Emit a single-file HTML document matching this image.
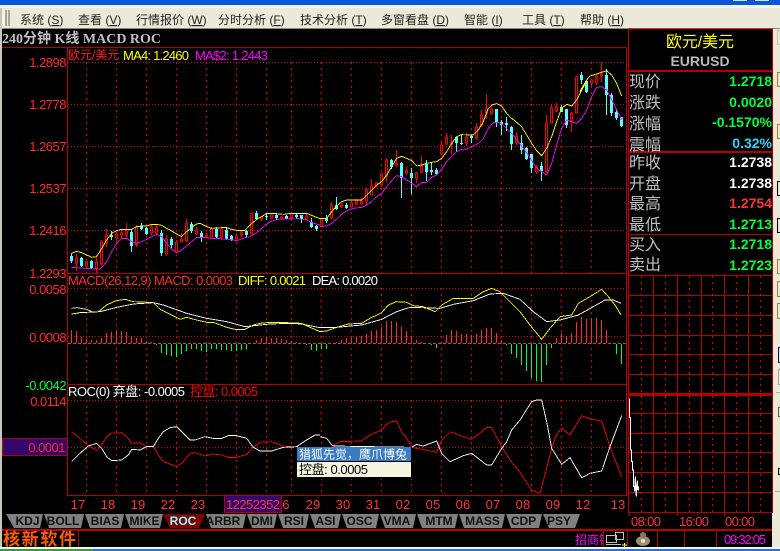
<!DOCTYPE html>
<html lang="zh"><head><meta charset="utf-8"><title>EURUSD</title>
<style>
html,body{margin:0;padding:0;background:#000;width:780px;height:551px;overflow:hidden}
svg{display:block;position:absolute;left:0;top:0}
text{font-family:"Liberation Sans","WenQuanYi Zen Hei","Noto Sans CJK SC",sans-serif;font-size:12px}
.m text,text.m{fill:#222;font-size:12px}
.ln{shape-rendering:crispEdges;fill:none}
.ax{fill:#ff2a2a;text-anchor:end;font-size:13px;letter-spacing:-.5px}
.xl{fill:#ff3333;text-anchor:middle;font-size:13px;letter-spacing:.2px}
.tb{fill:#111;font-weight:bold;text-anchor:middle}
.lb{fill:#c0c0c0;font-size:16px}
.v{font-size:14px;font-weight:bold;text-anchor:end}
.lg{font-size:13px}
polyline{stroke-width:.9}
</style></head><body>
<svg width="780" height="551" viewBox="0 0 780 551" xmlns="http://www.w3.org/2000/svg">
<rect width="780" height="551" fill="#000"/>
<!-- window chrome -->
<rect width="780" height="5" fill="#0a55de"/>
<rect x="733" y="0" width="14" height="1" fill="#d8e4f8"/><rect x="755" y="0" width="14" height="1" fill="#d8e4f8"/>
<rect y="5" width="780" height="3" fill="#f4f3ec"/>
<rect y="8" width="780" height="20" fill="#ece9d8"/>
<rect y="28" width="780" height="1" fill="#8a887c"/>
<rect x="0" y="8" width="2" height="540" fill="#c9c6b8"/>
<rect x="772" y="29" width="8" height="519" fill="#ece9d8"/>
<rect x="3" y="10" width="1" height="16" fill="#fff"/><rect x="5" y="10" width="2" height="16" fill="#a8a698"/><rect x="8" y="10" width="2" height="16" fill="#a8a698"/>
<!-- menu -->
<g class="m">
<text x="20" y="24">系统 (<tspan text-decoration="underline">S</tspan>)</text>
<text x="78" y="24">查看 (<tspan text-decoration="underline">V</tspan>)</text>
<text x="136" y="24">行情报价 (<tspan text-decoration="underline">W</tspan>)</text>
<text x="218" y="24">分时分析 (<tspan text-decoration="underline">F</tspan>)</text>
<text x="300" y="24">技术分析 (<tspan text-decoration="underline">T</tspan>)</text>
<text x="381" y="24">多窗看盘 (<tspan text-decoration="underline">D</tspan>)</text>
<text x="464" y="24">智能 (<tspan text-decoration="underline">I</tspan>)</text>
<text x="522" y="24">工具 (<tspan text-decoration="underline">T</tspan>)</text>
<text x="580" y="24">帮助 (<tspan text-decoration="underline">H</tspan>)</text>
</g>
<text x="2" y="43" style="font-family:'Liberation Serif','WenQuanYi Zen Hei','Noto Sans CJK SC',serif;font-size:14px;font-weight:bold" fill="#c0c0c0">240分钟 K线 MACD ROC</text>

<!-- dotted grid -->
<g class="ln" stroke="#e00000" stroke-dasharray="1 2">
<path d="M68 62.5H626M68 104.5H626M68 146.5H626M68 188.5H626M68 230.5H626M68 288.5H626M68 336.5H626M68 400.5H626M68 447.5H626"/>
</g>
<g class="ln" stroke="#e00000" stroke-dasharray="2 4">
<path d="M86.5 62V273M116.5 62V273M146.5 62V273M176.5 62V273M206.5 62V273M236.5 62V273M266.5 62V273M291.5 62V273M321.5 62V273M351.5 62V273M381.5 62V273M411.5 62V273M441.5 62V273M471.5 62V273M501.5 62V273M531.5 62V273M561.5 62V273M591.5 62V273"/>
<path d="M86.5 288V384M116.5 288V384M146.5 288V384M176.5 288V384M206.5 288V384M236.5 288V384M266.5 288V384M291.5 288V384M321.5 288V384M351.5 288V384M381.5 288V384M411.5 288V384M441.5 288V384M471.5 288V384M501.5 288V384M531.5 288V384M561.5 288V384M591.5 288V384"/>
<path d="M86.5 400V495M116.5 400V495M146.5 400V495M176.5 400V495M206.5 400V495M236.5 400V495M266.5 400V495M291.5 400V495M321.5 400V495M351.5 400V495M381.5 400V495M411.5 400V495M441.5 400V495M471.5 400V495M501.5 400V495M531.5 400V495M561.5 400V495M591.5 400V495"/>
</g>
<!-- pane frames -->
<g class="ln" stroke="#b80000">
<path d="M2 47.5H626.5V495.5H67.5V47.5"/>
<path d="M68 273.5H626M68 384.5H626"/>
</g>

<!-- candles: wicks -->
<path class="ln" stroke="#ff0000" d="M76.5 254V271M86.5 259V267M96.5 255V273M101.5 240V265M106.5 229V247M116.5 232V242M121.5 230V239M126.5 223V238M136.5 225V247M151.5 225V235M156.5 225V235M166.5 235V256M176.5 240V253M181.5 233V242M186.5 219V242M196.5 227V235M206.5 233V238M211.5 227V238M221.5 227V240M236.5 233V240M241.5 230V237M251.5 213V235M261.5 216V221M271.5 215V219M281.5 216V220M291.5 213V219M306.5 214V219M321.5 219V226M331.5 202V219M341.5 203V208M351.5 202V208M356.5 199V205M361.5 198V205M366.5 188V205M371.5 179V195M376.5 182V187M381.5 173V187M386.5 158V182M396.5 150V167M406.5 167V175M416.5 172V183M421.5 156V173M441.5 140V155M446.5 133V145M451.5 135V154M466.5 133V146M476.5 123V140M481.5 110V127M486.5 94V119M491.5 105V115M516.5 132V145M536.5 165V174M546.5 115V173M551.5 104V123M556.5 103V112M571.5 112V132M576.5 76V113M591.5 79V87M596.5 74V85M601.5 62V82"/>
<!-- red hollow bodies -->
<path class="ln" stroke="#ff0000" style="fill:#000" d="M75.5 258h2V263h-2zM85.5 262h2V266h-2zM95.5 262h2V268h-2zM100.5 242h2V264h-2zM105.5 235h2V243h-2zM115.5 234h2V238h-2zM120.5 233h2V235h-2zM125.5 231h2V235h-2zM135.5 227h2V245h-2zM150.5 227h2V233h-2zM155.5 227h2V233h-2zM165.5 239h2V254h-2zM175.5 242h2V252h-2zM180.5 239h2V242h-2zM185.5 223h2V241h-2zM195.5 231h2V234h-2zM205.5 235h2V237h-2zM210.5 229h2V237h-2zM220.5 229h2V237h-2zM235.5 236h2V239h-2zM240.5 232h2V235h-2zM250.5 213h2V234h-2zM260.5 217h2V219h-2zM270.5 215h2V218h-2zM280.5 217h2V219h-2zM290.5 214h2V218h-2zM305.5 216h2V219h-2zM320.5 219h2V226h-2zM330.5 205h2V218h-2zM340.5 205h2V207h-2zM350.5 203h2V207h-2zM355.5 201h2V204h-2zM360.5 201h2V204h-2zM365.5 190h2V201h-2zM370.5 186h2V195h-2zM375.5 183h2V187h-2zM380.5 174h2V185h-2zM385.5 160h2V176h-2zM395.5 163h2V165h-2zM405.5 170h2V173h-2zM415.5 173h2V178h-2zM420.5 166h2V172h-2zM440.5 145h2V154h-2zM445.5 137h2V144h-2zM450.5 143h2V144h-2zM465.5 137h2V143h-2zM475.5 127h2V138h-2zM480.5 115h2V125h-2zM485.5 109h2V113h-2zM490.5 109h2V114h-2zM515.5 136h2V143h-2zM535.5 167h2V172h-2zM545.5 123h2V172h-2zM550.5 108h2V123h-2zM555.5 107h2V111h-2zM570.5 113h2V122h-2zM575.5 77h2V113h-2zM590.5 80h2V83h-2zM595.5 76h2V83h-2zM600.5 74h2V76h-2z"/>
<!-- cyan wicks -->
<path class="ln" stroke="#54ffff" d="M71.5 253V263M81.5 257V267M91.5 260V269M111.5 231V240M131.5 230V252M141.5 223V230M146.5 227V235M161.5 230V256M171.5 237V248M191.5 222V233M201.5 231V242M216.5 227V239M226.5 227V240M231.5 235V241M246.5 230V237M256.5 211V220M266.5 213V220M276.5 214V220M286.5 215V219M296.5 213V219M301.5 215V223M311.5 218V228M316.5 225V231M326.5 215V223M336.5 197V210M346.5 203V209M391.5 159V169M401.5 162V198M411.5 168V194M426.5 160V181M431.5 163V175M436.5 168V175M456.5 137V152M461.5 135V145M471.5 135V143M496.5 109V127M501.5 120V135M506.5 117V131M511.5 126V150M521.5 135V154M526.5 147V160M531.5 154V173M541.5 162V181M561.5 105V112M566.5 109V128M581.5 72V84M586.5 80V93M606.5 69V115M611.5 93V116M616.5 110V120M621.5 117V127"/>
<!-- cyan bodies -->
<path class="ln" stroke="#54ffff" stroke-width="3" d="M71.5 256V261M81.5 258V266M91.5 261V268M111.5 235V237M131.5 232V246M141.5 226V229M146.5 228V234M161.5 233V253M171.5 239V245M191.5 224V231M201.5 233V237M216.5 229V237M226.5 230V239M231.5 236V240M246.5 231V235M256.5 213V219M266.5 216V217M276.5 215V218M286.5 216V219M296.5 215V217M301.5 215V219M311.5 222V227M316.5 226V229M326.5 218V221M336.5 205V209M346.5 205V208M391.5 160V167M401.5 163V178M411.5 173V178M426.5 164V172M431.5 170V172M436.5 170V174M456.5 137V143M461.5 143V144M471.5 136V138M496.5 109V122M501.5 122V125M506.5 123V125M511.5 127V144M521.5 143V150M526.5 148V159M531.5 154V168M541.5 166V171M561.5 107V112M566.5 109V125M581.5 75V80M586.5 81V92M606.5 75V95M611.5 95V113M616.5 112V118M621.5 117V126"/>

<!-- MA lines -->
<g class="ln" stroke="#ffff00">
<g transform="translate(0,140) scale(.33333)"><polyline vector-effect="non-scaling-stroke" points="215,340 230,334 245,338 260,345 275,352 290,350 305,325 320,300 335,280 350,272 365,268 395,268 410,260 425,258 440,258 455,253 470,253 485,256 500,265 515,273 530,282 545,290 560,275 575,262 590,252 600,250 620,260 635,265 665,263 680,263 695,268 710,271 735,271 750,255 770,238 785,230 800,220 820,220 850,223 875,220 920,220 935,226 960,236"/></g>
<g transform="translate(320,80) scale(.33333)"><polyline vector-effect="non-scaling-stroke" points="0,415 20,415 35,395 50,378 65,365 80,360 125,360 140,345 155,330 170,315 185,305 200,285 215,260 230,235 245,229 260,235 275,242 290,258 305,255 320,250 335,247 350,245 365,235 380,215 395,190 410,170 425,164 460,165 475,150 490,125 505,85 515,75 530,71 545,78 560,100 575,115 590,127 605,140 620,165 635,190 650,212 665,227 680,205 695,170 710,125 725,85 740,73 755,78 770,60 785,30 800,5"/></g>
<g transform="translate(390,0) scale(.33333)"><polyline vector-effect="non-scaling-stroke" points="570,275 575,265 590,240 600,228 620,222 650,212 665,225 680,250 695,288"/></g>
</g>
<g class="ln" stroke="#ff00ff">
<g transform="translate(0,140) scale(.33333)"><polyline vector-effect="non-scaling-stroke" points="215,382 300,388 320,365 335,335 350,310 365,296 380,295 395,305 410,310 425,305 440,298 455,290 470,283 485,290 500,310 515,328 530,338 545,330 560,318 575,305 590,292 620,293 635,295 680,297 710,302 735,293 750,290 770,278 785,265 800,252 815,243 835,238 895,236 920,240 935,248 960,255"/></g>
<g transform="translate(320,80) scale(.33333)"><polyline vector-effect="non-scaling-stroke" points="0,440 20,438 35,430 50,417 65,403 80,392 100,385 125,382 140,375 155,365 170,350 185,340 200,320 215,302 230,287 245,290 260,300 275,310 290,320 305,307 320,307 335,292 350,285 365,268 380,245 395,228 410,215 425,208 440,207 455,200 475,190 490,175 505,145 520,127 535,127 550,135 565,150 580,165 595,185 610,205 625,225 640,250 655,270 670,277 680,285 695,250 710,195 725,145 740,120 755,125 770,130 785,115 800,90 815,50 830,22 845,20 860,30 875,60 890,90 905,120"/></g>
</g>

<!-- MACD bars -->
<path class="ln" stroke="#ff2a2a" stroke-dasharray="3 2" d="M68 343.5H626"/>
<path class="ln" stroke="#ff2a2a" d="M71.5 343V330M76.5 343V331M81.5 343V337M86.5 343V339M91.5 343V340M96.5 343V340M101.5 343V338M106.5 343V333M111.5 343V332M116.5 343V330M121.5 343V331M126.5 343V332M131.5 343V336M136.5 343V338M141.5 343V338M146.5 343V341M151.5 343V342M256.5 343V340M261.5 343V338M266.5 343V337M271.5 343V338M276.5 343V338M281.5 343V339M286.5 343V340M291.5 343V341M296.5 343V342M336.5 343V342M341.5 343V340M346.5 343V338M351.5 343V338M356.5 343V337M361.5 343V336M366.5 343V334M371.5 343V331M376.5 343V330M381.5 343V327M386.5 343V321M391.5 343V321M396.5 343V322M401.5 343V327M406.5 343V331M411.5 343V336M416.5 343V340M421.5 343V342M441.5 343V342M446.5 343V335M451.5 343V330M456.5 343V331M461.5 343V334M466.5 343V334M471.5 343V335M476.5 343V334M481.5 343V330M486.5 343V328M491.5 343V328M496.5 343V333M501.5 343V340M556.5 343V338M561.5 343V333M566.5 343V336M571.5 343V333M576.5 343V322M581.5 343V317M586.5 343V319M591.5 343V318M596.5 343V318M601.5 343V320M606.5 343V330"/>
<path class="ln" stroke="#00ff3c" d="M156.5 344V345M161.5 344V353M166.5 344V355M171.5 344V356M176.5 344V357M181.5 344V354M186.5 344V351M191.5 344V349M196.5 344V349M201.5 344V351M206.5 344V352M211.5 344V349M216.5 344V349M221.5 344V350M226.5 344V350M231.5 344V351M236.5 344V351M241.5 344V350M246.5 344V349M306.5 344V345M311.5 344V350M316.5 344V351M321.5 344V349M326.5 344V349M431.5 344V345M436.5 344V348M506.5 344V345M511.5 344V354M516.5 344V358M521.5 344V365M526.5 344V371M531.5 344V378M536.5 344V381M541.5 344V382M546.5 344V365M551.5 344V348M616.5 344V354M621.5 344V364"/>
<!-- MACD lines -->
<g class="ln" stroke="#ffffff">
<g transform="translate(0,270) scale(.33333)"><polyline vector-effect="non-scaling-stroke" points="215,132 240,128 300,125 350,112 400,102 460,98 490,105 560,130 620,145 680,155 735,170 780,165 810,162 870,160 905,162 960,173"/></g>
<g transform="translate(320,270) scale(.33333)"><polyline vector-effect="non-scaling-stroke" points="0,173 50,172 125,165 185,148 230,125 270,112 360,115 400,103 460,92 510,72 550,70 600,88 640,125 680,155 720,150 775,135 820,110 855,90 880,90 903,100"/></g>
</g>
<g class="ln" stroke="#ffff00">
<g transform="translate(0,270) scale(.33333)"><polyline vector-effect="non-scaling-stroke" points="215,115 230,113 260,118 280,127 295,125 320,105 345,93 375,88 400,95 445,97 460,98 480,118 510,133 540,148 560,142 590,150 620,157 640,157 680,172 705,178 735,178 760,165 780,160 810,157 840,157 905,160 930,172 960,185"/></g>
<g transform="translate(320,270) scale(.33333)"><polyline vector-effect="non-scaling-stroke" points="0,185 20,183 50,172 85,162 125,160 150,145 185,128 205,105 230,95 260,97 280,107 310,110 345,125 365,105 400,85 460,85 490,65 515,55 540,65 565,90 600,125 630,165 665,208 690,175 720,140 755,135 775,100 810,80 845,58 865,80 885,105 903,135"/></g>
</g>

<!-- ROC lines -->
<g class="ln" stroke="#ff0000">
<g transform="translate(0,385) scale(.33333)"><polyline vector-effect="non-scaling-stroke" points="215,140 240,160 265,183 290,195 305,180 320,155 335,145 365,143 385,160 395,175 420,173 440,185 460,185 475,210 490,230 510,237 530,245 550,230 570,205 585,203 615,213 640,207 665,210 685,217 710,217 740,208 760,187 780,172 815,170 850,183 890,187"/></g>
<g transform="translate(320,385) scale(.33333)"><polyline vector-effect="non-scaling-stroke" points="38,183 60,170 125,168 150,150 185,135 205,112 230,108 245,142 260,160 275,187 350,202 365,165 390,140 430,155 455,163 500,128 515,128 545,185 575,232 600,262 635,315 660,325 680,250 695,190 710,148 725,130 750,150 785,92 810,102 845,108 870,185 905,275"/></g>
</g>
<g class="ln" stroke="#ffffff">
<g transform="translate(0,385) scale(.33333)"><polyline vector-effect="non-scaling-stroke" points="215,230 240,205 265,183 290,175 305,190 320,215 335,227 365,225 385,210 395,193 420,195 440,185 460,185 475,160 490,140 510,128 530,125 550,145 570,165 585,165 615,155 640,160 665,160 685,152 710,152 740,160 760,187 780,198 815,198 850,187 890,185 920,165 945,150 960,150"/></g>
<g transform="translate(320,385) scale(.33333)"><polyline vector-effect="non-scaling-stroke" points="0,155 20,160 38,183 275,187 290,178 310,183 350,168 365,205 390,230 430,212 455,205 500,240 515,240 545,190 560,170 575,135 600,105 635,50 650,45 665,45 680,110 695,190 725,238 750,218 785,278 810,265 845,258 870,185 905,92"/></g>
</g>

<!-- popup -->
<rect x="296" y="447" width="116" height="32" fill="#000"/>
<rect x="297" y="447" width="114" height="14" fill="#3a7cc4"/>
<rect x="297" y="462" width="114" height="15" fill="#f6f6e0"/>
<text x="299" y="458.5" fill="#fff">猎狐先觉，鹰爪博兔</text>
<text x="299" y="474" fill="#000" class="lg" textLength="69">控盘: 0.0005</text>

<!-- legends -->
<text x="68" y="59" fill="#ff1a1a">欧元/美元</text>
<text class="lg" x="123" y="60" fill="#ffff00" textLength="66">MA4: 1.2460</text>
<text class="lg" x="195" y="60" fill="#ff00ff" textLength="73">MA$2: 1.2443</text>
<text class="lg" x="68" y="285" fill="#ff2a2a" textLength="165">MACD(26,12,9) MACD: 0.0003</text>
<text class="lg" x="238" y="285" fill="#ffff00" textLength="68">DIFF: 0.0021</text>
<text class="lg" x="312" y="285" fill="#fff" textLength="66">DEA: 0.0020</text>
<text class="lg" x="68" y="396" fill="#fff" textLength="117">ROC(0) 弃盘: -0.0005</text>
<text class="lg" x="190" y="396" fill="#ff0000" textLength="68">控盘: 0.0005</text>

<!-- y axis -->
<text class="ax" x="66" y="67">1.2898</text>
<text class="ax" x="66" y="109">1.2778</text>
<text class="ax" x="66" y="151">1.2657</text>
<text class="ax" x="66" y="193">1.2537</text>
<text class="ax" x="66" y="235">1.2416</text>
<text class="ax" x="66" y="278">1.2293</text>
<text class="ax" x="66" y="294">0.0058</text>
<text class="ax" x="66" y="342">0.0008</text>
<text class="ax" x="66" y="390" style="fill:#00ff3c">-0.0042</text>
<text class="ax" x="66" y="406">0.0114</text>
<rect x="2.5" y="438.5" width="65" height="17" stroke="#b80000" class="ln" style="fill:#33086e"/>
<text class="ax" x="65" y="452">0.0001</text>

<!-- x axis -->
<text class="xl" x="78" y="509">17</text><text class="xl" x="108" y="509">18</text><text class="xl" x="138" y="509">19</text><text class="xl" x="168" y="509">22</text><text class="xl" x="198" y="509">23</text>
<rect x="224.5" y="495.5" width="57" height="17" class="ln" stroke="#b80000" style="fill:#33086e"/>
<text x="226" y="509" fill="#ff3333" class="lg" textLength="54">12252352</text>
<text class="xl" x="286" y="509">6</text>
<text class="xl" x="313" y="509">29</text><text class="xl" x="343" y="509">30</text><text class="xl" x="373" y="509">31</text><text class="xl" x="403" y="509">02</text><text class="xl" x="433" y="509">05</text><text class="xl" x="463" y="509">06</text><text class="xl" x="493" y="509">07</text><text class="xl" x="523" y="509">08</text><text class="xl" x="553" y="509">09</text><text class="xl" x="583" y="509">12</text><text class="xl" x="618" y="509">13</text>

<!-- tabs -->
<g fill="#808080">
<polygon points="6,514 43,514 40,528 14,528"/>
<polygon points="44,514 84,514 81,528 49,528"/>
<polygon points="85,514 124,514 121,528 90,528"/>
<polygon points="125,514 163,514 160,528 130,528"/>
<polygon points="206,514 246,514 243,528 211,528"/>
<polygon points="247,514 277,514 274,528 252,528"/>
<polygon points="278,514 309,514 306,528 283,528"/>
<polygon points="310,514 341,514 338,528 315,528"/>
<polygon points="342,514 379,514 376,528 347,528"/>
<polygon points="380,514 416,514 413,528 385,528"/>
<polygon points="417,514 458,514 455,528 422,528"/>
<polygon points="459,514 505,514 502,528 464,528"/>
<polygon points="506,514 542,514 539,528 511,528"/>
<polygon points="543,514 580,514 575,528 549,528"/>
</g>
<polygon points="163,514 205,514 199,528 170,528" fill="#800000"/>
<text class="tb" x="27.5" y="525">KDJ</text><text class="tb" x="63" y="525">BOLL</text><text class="tb" x="105" y="525">BIAS</text><text class="tb" x="144.5" y="525">MIKE</text>
<text class="tb" x="183" y="525" style="fill:#80ffff">ROC</text>
<text class="tb" x="223" y="525">ARBR</text><text class="tb" x="262" y="525">DMI</text><text class="tb" x="294" y="525">RSI</text><text class="tb" x="325.5" y="525">ASI</text><text class="tb" x="359.5" y="525">OSC</text><text class="tb" x="397" y="525">VMA</text><text class="tb" x="439" y="525">MTM</text><text class="tb" x="482.5" y="525">MASS</text><text class="tb" x="523.5" y="525">CDP</text><text class="tb" x="559" y="525">PSY</text>

<!-- status bar -->
<rect x="2" y="529" width="770" height="2" fill="#c00000"/>
<text x="3" y="545" fill="#ff5a00" style="font-size:17px;font-weight:bold" textLength="73">核新软件</text>
<g fill="#b00000"><rect x="78" y="531" width="1" height="16"/><rect x="627" y="531" width="1" height="16"/><rect x="657" y="531" width="1" height="16"/><rect x="684" y="531" width="1" height="16"/><rect x="716" y="531" width="1" height="16"/></g>
<text x="575" y="544" fill="#ff00ff">招商银</text>
<rect x="604" y="531" width="23" height="16" fill="#000"/>
<rect x="603" y="531" width="1" height="16" fill="#b00000"/>
<g class="ln" stroke="#c0c0c0"><rect x="606.5" y="535.5" width="10" height="7" /><rect x="615.5" y="532.5" width="8" height="7"/><path d="M606 544.5H621"/></g>
<path d="M622 545h5M624.5 543v4" stroke="#ffff40" class="ln"/>
<ellipse cx="643" cy="541" rx="7" ry="5" fill="#a08c70"/><circle cx="643" cy="535" r="3" fill="#8c7460"/><circle cx="643" cy="541" r="2" fill="#e8e0d0"/>
<text x="724" y="544" fill="#ff00ff" class="lg" textLength="42">09:32:05</text>
<!-- bottom edge -->
<rect y="547" width="780" height="2" fill="#f4f4f4"/>
<rect y="549" width="780" height="2" fill="#2a6ed8"/>
<rect y="549" width="93" height="2" fill="#3a9a3a"/>

<!-- right panel frame -->
<g class="ln" stroke="#b80000">
<path d="M628.5 29V512.5H772.5V29H628M629 71.5H772M629 152.5H772M629 234.5H772"/>
</g>
<rect x="629" y="151" width="143" height="2" fill="#b80000"/>
<rect x="629" y="70" width="143" height="2" fill="#b80000"/>
<text x="666" y="47" fill="#ffff00" style="font-size:16px" textLength="68">欧元/美元</text>
<text x="700" y="66" fill="#b8b8b8" style="font-size:14px;font-weight:bold" text-anchor="middle">EURUSD</text>
<text class="lb" x="629" y="87">现价</text><text class="lb" x="629" y="108">涨跌</text><text class="lb" x="629" y="129">涨幅</text><text class="lb" x="629" y="150">震幅</text>
<text class="lb" x="629" y="168">昨收</text><text class="lb" x="629" y="189">开盘</text><text class="lb" x="629" y="209">最高</text><text class="lb" x="629" y="230">最低</text>
<text class="lb" x="629" y="250">买入</text><text class="lb" x="629" y="270">卖出</text>
<g class="v">
<text class="v" x="772" y="86" fill="#00ff3c">1.2718</text>
<text class="v" x="772" y="107" fill="#00ff3c">0.0020</text>
<text class="v" x="772" y="127" fill="#00ff3c">-0.1570%</text>
<text class="v" x="772" y="148" fill="#2ad4ff">0.32%</text>
<text class="v" x="772" y="167" fill="#fff">1.2738</text>
<text class="v" x="772" y="188" fill="#fff">1.2738</text>
<text class="v" x="772" y="208" fill="#ff3333">1.2754</text>
<text class="v" x="772" y="229" fill="#00ff3c">1.2713</text>
<text class="v" x="772" y="249" fill="#00ff3c">1.2718</text>
<text class="v" x="772" y="270" fill="#00ff3c">1.2723</text>
</g>
<!-- mini chart -->
<g class="ln" stroke="#b80000">
<path d="M629 275.5H772M629 295.5H772M629 315.5H772M629 335.5H772M629 354.5H772M629 374.5H772M629 413.5H772M629 433.5H772M629 452.5H772M629 472.5H772M629 492.5H772"/>
<path d="M653.5 275V512M677.5 275V512M701.5 275V512M724.5 275V512M748.5 275V512"/>
</g>
<rect x="629" y="393" width="143" height="3" fill="#b80000"/>
<path class="ln" stroke="#d80000" stroke-dasharray="2 4" d="M641.5 276V512M665.5 276V512M689.5 276V512M712.5 276V512M736.5 276V512M760.5 276V512"/>
<g transform="translate(625,270) scale(.33333)"><polyline class="ln" stroke="#fff" vector-effect="non-scaling-stroke" points="13,385 13,443 16,443 16,540 19,540 19,575 22,575 22,600 25,600 25,650 28,650 28,665 31,620 31,650 34,680 34,650 37,632 37,660 40,650 40,662"/></g>
<!-- time axis -->
<path class="ln" stroke="#b80000" d="M629.5 513V516M677.5 513V516M724.5 513V516"/>
<text x="631" y="526" fill="#ff3333" class="lg" textLength="30">08:00</text>
<text x="679" y="526" fill="#ff3333" class="lg" textLength="30">16:00</text>
<text x="725" y="526" fill="#ff3333" class="lg" textLength="30">00:00</text>

<!-- right toolbar fragments -->
<g class="ln">
<rect x="777.5" y="30.5" width="3" height="14" stroke="#c0c0c0"/>
<rect x="777.5" y="72.5" width="3" height="14" stroke="#8a8a20"/>
<rect x="777.5" y="124.5" width="3" height="14" stroke="#8a8a20"/>
<rect x="777.5" y="181.5" width="3" height="14" stroke="#000"/>
<rect x="777.5" y="218.5" width="3" height="14" stroke="#000"/>
<rect x="777.5" y="259.5" width="3" height="14" stroke="#8a8a20"/>
<rect x="777.5" y="281.5" width="3" height="15" stroke="#8a8a20"/>
<rect x="777.5" y="303.5" width="3" height="15" stroke="#8a8a20"/>
<rect x="778.5" y="347.5" width="2" height="15" stroke="#000090"/>
<rect x="778.5" y="369.5" width="2" height="15" stroke="#a0a0a0"/>
<rect x="778.5" y="407.5" width="2" height="9" stroke="#555"/>
<rect x="778.5" y="468.5" width="2" height="6" stroke="#000"/>
</g>
<rect x="776" y="392" width="4" height="1" fill="#aaa"/>
<rect x="775" y="491" width="5" height="1" fill="#aaa"/>
</svg>
</body></html>
